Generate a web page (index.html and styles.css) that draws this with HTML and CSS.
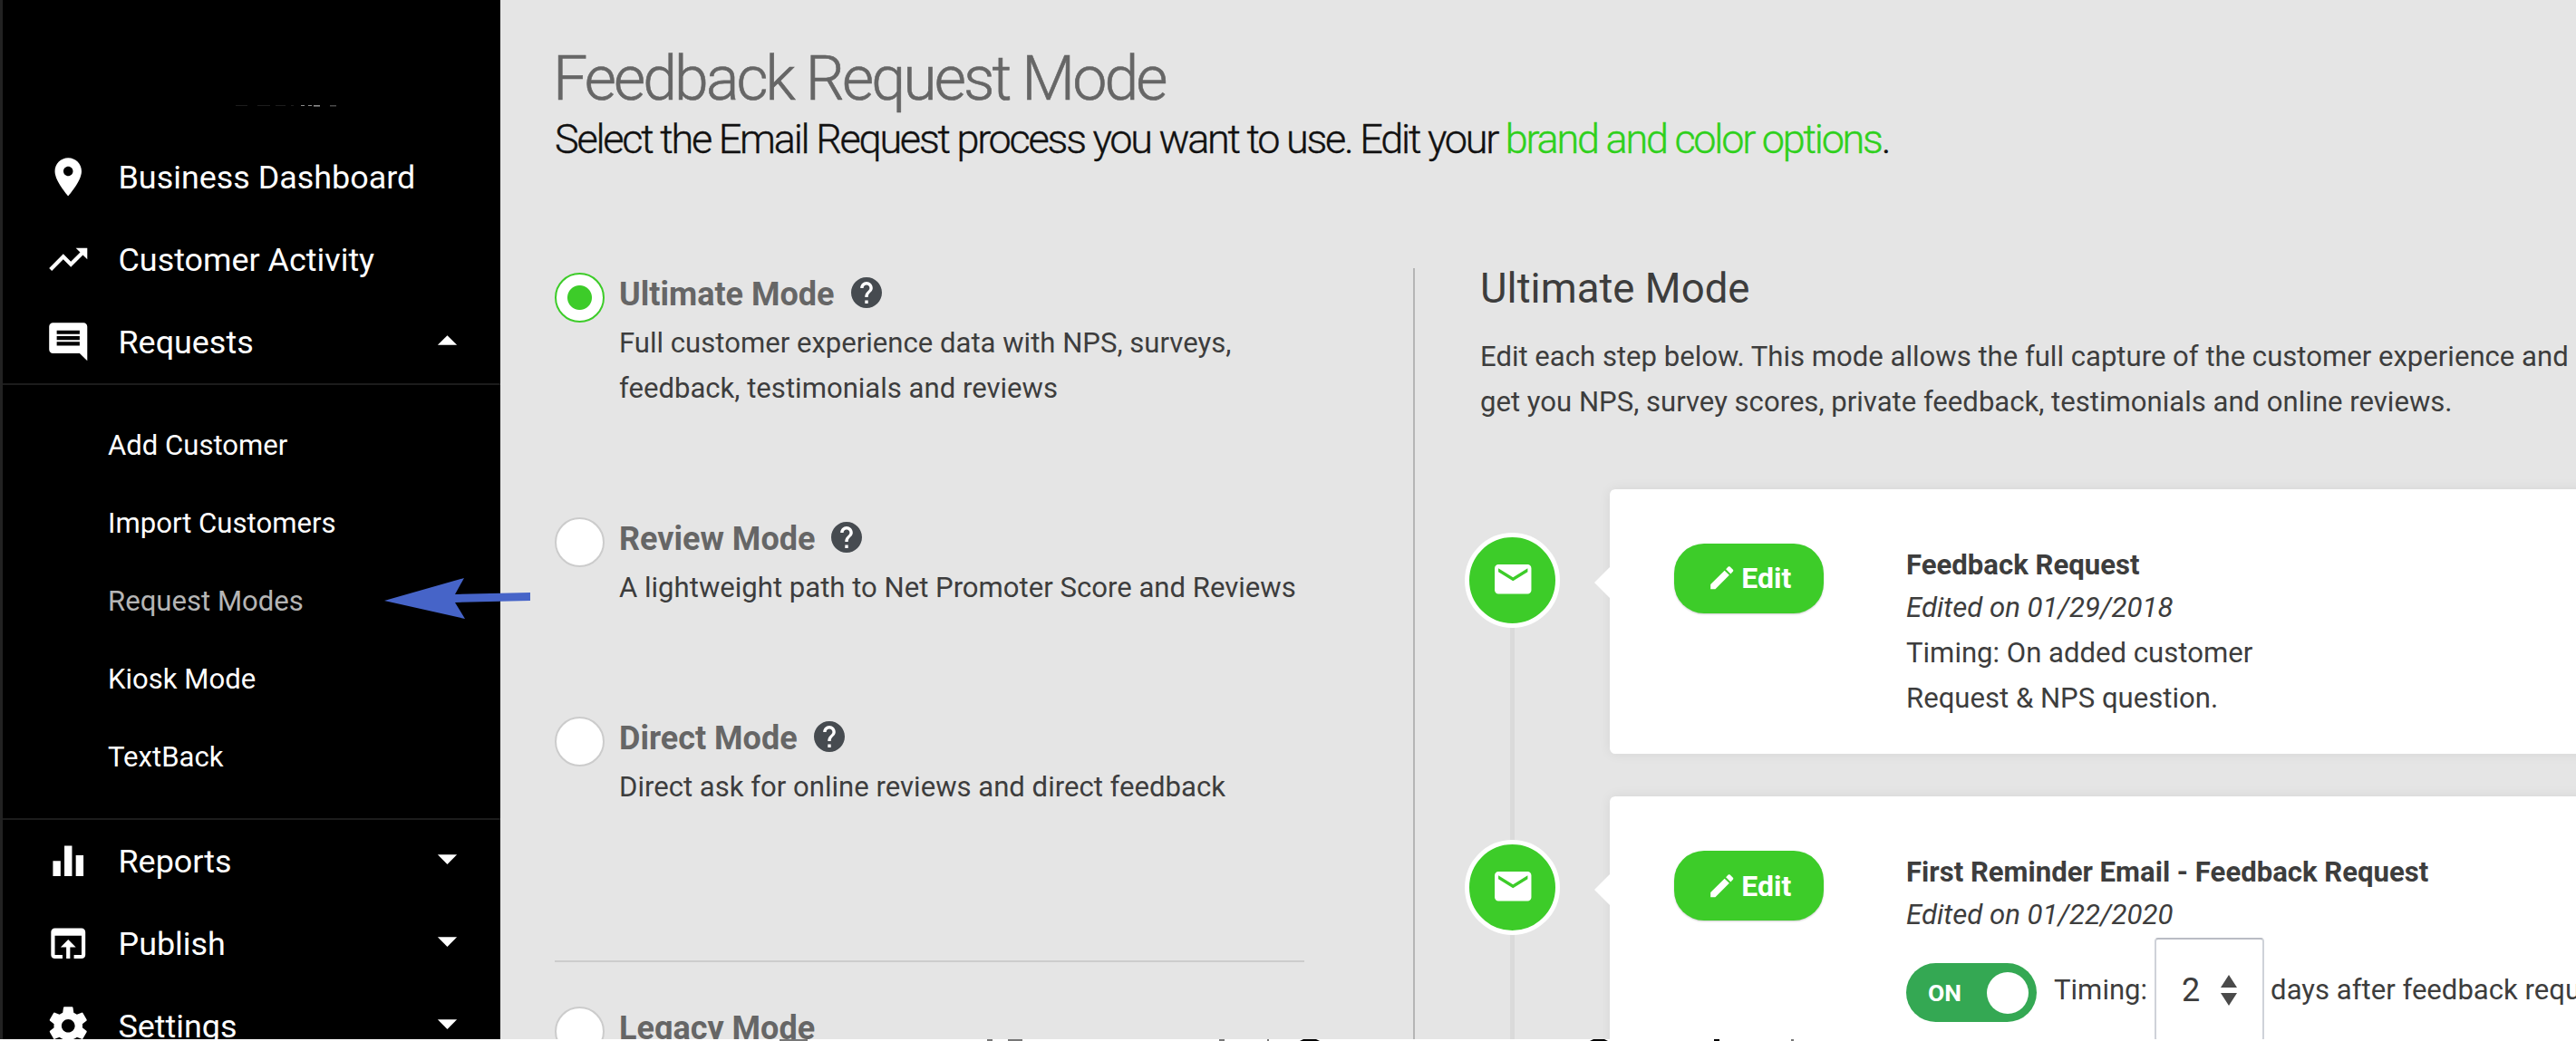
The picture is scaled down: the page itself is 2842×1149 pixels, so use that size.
FILE: index.html
```html
<!DOCTYPE html>
<html lang="en">
<head>
  <meta charset="UTF-8">
  <meta name="viewport" content="width=device-width, initial-scale=1.0">
  <title>Feedback Request Mode</title>
  <link rel="stylesheet" href="styles.css">
</head>
<body>

<!-- shared icons -->
<svg class="sprite" aria-hidden="true">
  <symbol id="help" viewBox="2 2 20 20"><path d="M12 2C6.48 2 2 6.48 2 12s4.48 10 10 10 10-4.48 10-10S17.52 2 12 2zm1 17h-2v-2h2v2zm2.07-7.75l-.9.92C13.45 12.9 13 13.5 13 15h-2v-.5c0-1.1.45-2.1 1.17-2.83l1.24-1.26c.37-.36.59-.86.59-1.41 0-1.1-.9-2-2-2s-2 .9-2 2H8c0-2.21 1.79-4 4-4s4 1.79 4 4c0 .88-.36 1.68-.93 2.25z"/></symbol>
  <symbol id="mail" viewBox="0 0 24 24"><path d="M20 4H4c-1.1 0-1.99.9-1.99 2L2 18c0 1.1.9 2 2 2h16c1.1 0 2-.9 2-2V6c0-1.1-.9-2-2-2zm0 4l-8 5-8-5V6l8 5 8-5v2z"/></symbol>
  <symbol id="pencil" viewBox="0 0 24 24"><path d="M3 17.25V21h3.75L17.81 9.94l-3.75-3.75L3 17.25zM20.71 7.04c.39-.39.39-1.02 0-1.41l-2.34-2.34c-.39-.39-1.02-.39-1.41 0l-1.83 1.83 3.75 3.75 1.83-1.83z"/></symbol>
  <symbol id="drop" viewBox="0 0 24 24"><path d="M7 10l5 5 5-5z"/></symbol>
</svg>

<div class="app">
  <aside class="sidebar">
    <div class="logo">
      <svg viewBox="0 0 120 4">
        <g fill="#1d1d1d">
          <rect x="1" y="1" width="13" height="1"/><rect x="25" y="1" width="14" height="1"/>
          <rect x="45" y="1" width="11" height="1"/><rect x="62" y="1" width="3" height="1"/>
        </g>
        <g fill="#8a8a8a">
          <rect x="73" y="1" width="4" height="1"/><rect x="81" y="1" width="4" height="1"/>
          <rect x="87" y="1" width="7" height="1.6"/><rect x="105" y="1.2" width="7" height="1.2" fill="#5c5c5c"/>
        </g>
      </svg>
    </div>
    <nav>
      <a class="nav-item">
        <svg class="nav-icon" viewBox="0 0 24 24"><path d="M12 2C8.13 2 5 5.13 5 9c0 5.25 7 13 7 13s7-7.75 7-13c0-3.87-3.13-7-7-7zm0 9.5c-1.38 0-2.5-1.12-2.5-2.5s1.12-2.5 2.5-2.5 2.5 1.12 2.5 2.5-1.12 2.5-2.5 2.5z"/></svg>
        <span>Business Dashboard</span>
      </a>
      <a class="nav-item">
        <svg class="nav-icon" viewBox="0 0 24 24"><path d="M16 6l2.29 2.29-4.88 4.88-4-4L2 16.59 3.41 18l6-6 4 4 6.3-6.29L22 12V6z"/></svg>
        <span>Customer Activity</span>
      </a>
      <a class="nav-item">
        <svg class="nav-icon" viewBox="0 0 24 24"><path d="M21.99 4c0-1.1-.89-2-1.99-2H4c-1.1 0-2 .9-2 2v12c0 1.1.9 2 2 2h14l4 4-.01-18zM18 14H6v-2h12v2zm0-3H6V9h12v2zm0-3H6V6h12v2z"/></svg>
        <span>Requests</span>
        <svg class="nav-caret up"><use href="#drop"/></svg>
      </a>
      <div class="submenu">
        <a>Add Customer</a>
        <a>Import Customers</a>
        <a class="active">Request Modes</a>
        <a>Kiosk Mode</a>
        <a>TextBack</a>
      </div>
      <a class="nav-item">
        <svg class="nav-icon" viewBox="0 0 24 24"><path d="M10 20h4V4h-4v16zm-6 0h4v-8H4v8zM16 9v11h4V9h-4z"/></svg>
        <span>Reports</span>
        <svg class="nav-caret"><use href="#drop"/></svg>
      </a>
      <a class="nav-item">
        <svg class="nav-icon" viewBox="0 0 24 24"><path d="M19 4H5c-1.11 0-2 .9-2 2v12c0 1.1.89 2 2 2h4v-2H5V8h14v10h-4v2h4c1.1 0 2-.9 2-2V6c0-1.1-.89-2-2-2zm-7 6l-4 4h3v6h2v-6h3l-4-4z"/></svg>
        <span>Publish</span>
        <svg class="nav-caret"><use href="#drop"/></svg>
      </a>
      <a class="nav-item">
        <svg class="nav-icon" viewBox="0 0 24 24"><path d="M19.43 12.98c.04-.32.07-.64.07-.98s-.03-.66-.07-.98l2.11-1.65c.19-.15.24-.42.12-.64l-2-3.46c-.12-.22-.39-.3-.61-.22l-2.49 1c-.52-.4-1.08-.73-1.69-.98l-.38-2.65C14.46 2.18 14.25 2 14 2h-4c-.25 0-.46.18-.49.42l-.38 2.65c-.61.25-1.17.59-1.69.98l-2.49-1c-.23-.09-.49 0-.61.22l-2 3.46c-.13.22-.07.49.12.64l2.11 1.65c-.04.32-.07.65-.07.98s.03.66.07.98l-2.11 1.65c-.19.15-.24.42-.12.64l2 3.46c.12.22.39.3.61.22l2.49-1c.52.4 1.08.73 1.69.98l.38 2.65c.03.24.24.42.49.42h4c.25 0 .46-.18.49-.42l.38-2.65c.61-.25 1.17-.59 1.69-.98l2.49 1c.23.09.49 0 .61-.22l2-3.46c.12-.22.07-.49-.12-.64l-2.11-1.65zM12 15.5c-1.93 0-3.5-1.57-3.5-3.5s1.57-3.5 3.5-3.5 3.5 1.57 3.5 3.5-1.57 3.5-3.5 3.5z"/></svg>
        <span>Settings</span>
        <svg class="nav-caret"><use href="#drop"/></svg>
      </a>
    </nav>
  </aside>

  <main class="content">
    <h1>Feedback Request Mode</h1>
    <p class="lead">Select the Email Request process you want to use. Edit your <a>brand and color options</a>.</p>

    <div class="columns">
      <section class="modes">
        <div class="mode">
          <span class="radio checked"></span>
          <div>
            <h3>Ultimate Mode <svg class="help"><use href="#help"/></svg></h3>
            <p>Full customer experience data with NPS, surveys,<br>feedback, testimonials and reviews</p>
          </div>
        </div>
        <div class="mode">
          <span class="radio"></span>
          <div>
            <h3>Review Mode <svg class="help"><use href="#help"/></svg></h3>
            <p>A lightweight path to Net Promoter Score and Reviews</p>
          </div>
        </div>
        <div class="mode">
          <span class="radio"></span>
          <div>
            <h3>Direct Mode <svg class="help"><use href="#help"/></svg></h3>
            <p>Direct ask for online reviews and direct feedback</p>
          </div>
        </div>
        <hr>
        <div class="mode">
          <span class="radio"></span>
          <div>
            <h3>Legacy Mode</h3>
          </div>
        </div>
      </section>

      <section class="detail">
        <h2>Ultimate Mode</h2>
        <p class="intro">Edit each step below. This mode allows the full capture of the customer experience and it will<br>get you NPS, survey scores, private feedback, testimonials and online reviews.</p>

        <div class="step">
          <div class="marker">
            <span class="rail start"></span>
            <span class="dot"><svg><use href="#mail"/></svg></span>
            <span class="rail"></span>
          </div>
          <div class="card">
            <button class="edit"><svg><use href="#pencil"/></svg>Edit</button>
            <div class="info">
              <h4>Feedback Request</h4>
              <em>Edited on 01/29/2018</em>
              <p>Timing: On added customer</p>
              <p>Request &amp; NPS question.</p>
            </div>
          </div>
        </div>

        <div class="step">
          <div class="marker">
            <span class="rail start"></span>
            <span class="dot"><svg><use href="#mail"/></svg></span>
            <span class="rail"></span>
          </div>
          <div class="card">
            <button class="edit"><svg><use href="#pencil"/></svg>Edit</button>
            <div class="info">
              <h4>First Reminder Email - Feedback Request</h4>
              <em>Edited on 01/22/2020</em>
              <div class="timing">
                <span class="toggle">ON<i></i></span>
                <span>Timing:</span>
                <span class="days">2
                  <svg viewBox="0 0 18 34"><path d="M9 0l9 14H0zM0 20h18L9 34z"/></svg>
                </span>
                <span>days after feedback request</span>
              </div>
            </div>
          </div>
        </div>
      </section>
    </div>
  </main>
</div>

<svg class="pointer" viewBox="0 0 162 46"><path d="M0 25L88 0 78 18 161 16v9L78 27 89 45z"/></svg>

<div class="footer-edge">
  <svg viewBox="0 0 2842 2">
    <g fill="#777">
      <rect x="860" width="31" height="2"/><rect x="1089" width="6" height="2"/><rect x="1112" width="16" height="2"/>
      <rect x="1345" width="6" height="2"/><rect x="1398" width="2" height="2"/><rect x="1976" width="3" height="2"/>
    </g>
    <path d="M1438 0h14l4 2h-22zM1758 0h12l4 2h-20zM1891 0h6v2h-6z"/>
  </svg>
</div>

</body>
</html>
```
FILE: styles.css
```css
* {
  box-sizing: border-box;
}

body {
  margin: 0;
  height: 100vh;
  overflow: hidden;
  position: relative;
  font-family: Roboto, "Liberation Sans", sans-serif;
  font-size: 31.1px;
  line-height: 50px;
  color: #3d3d3d;
  background-color: #e5e5e5;
}

h1, h2, h3, h4, p {
  margin: 0;
}

.sprite {
  display: none;
}

.app {
  display: flex;
  height: 100vh;
  overflow: hidden;
}

/* Sidebar */
.sidebar {
  flex: none;
  width: 552px;
  background-color: #000;
  border-left: 3px solid #222;
  color: #fff;
}

.logo {
  height: 150px;
  padding: 115px 0 0 256px;
}

.logo svg {
  display: block;
  width: 120px;
  height: 4px;
}

.nav-item {
  display: flex;
  align-items: center;
  height: 91px;
  padding: 0 45px 0 47px;
  font-size: 35.9px;
}

.nav-icon {
  width: 50.5px;
  height: 50.5px;
  margin-right: 30px;
  fill: #fff;
}

.nav-caret {
  width: 51px;
  height: 51px;
  margin: -6px -12px 0 auto;
  fill: #fff;
}

.nav-caret.up {
  margin-top: -2px;
  transform: rotate(180deg);
}

.submenu {
  display: flex;
  flex-direction: column;
  padding: 24px 0 24px 116px;
  border-top: 2px solid #1c1c1c;
  border-bottom: 2px solid #1c1c1c;
  font-size: 31.1px;
}

.submenu a {
  line-height: 86px;
}

.submenu .active {
  color: #b5b5b5;
}

/* Main */
.content {
  flex: 1;
  min-width: 0;
  padding: 47px 0 0 60px;
  white-space: nowrap;
}

h1 {
  margin-left: -2px;
  font-size: 68px;
  font-weight: 300;
  line-height: 80px;
  letter-spacing: -2.9px;
  color: #666;
  -webkit-text-stroke: 0.6px #666;
}

.lead {
  font-size: 45px;
  font-weight: 300;
  line-height: 54px;
  letter-spacing: -2.24px;
  color: #111;
  -webkit-text-stroke: 0.4px;
}

.lead a {
  color: #2fd01c;
}

.columns {
  display: flex;
  margin-top: 115px;
}

.modes {
  flex: none;
  width: 949px;
  height: 860px;
  padding-top: 4px;
  border-right: 2px solid #b5b5b5;
}

.mode {
  display: flex;
  gap: 16px;
  margin-bottom: 116px;
}

.mode h3 {
  display: flex;
  align-items: center;
  margin-bottom: 4px;
  font-size: 36px;
  line-height: 50px;
  color: #666;
}

.help {
  width: 34px;
  height: 34px;
  margin: -4px 0 0 18px;
  fill: #464b50;
  background: radial-gradient(#fff 50%, transparent 55%);
}

.radio {
  width: 55px;
  height: 55px;
  margin-top: 1px;
  border: 2px solid #ccc;
  border-radius: 50%;
  background-color: #fff;
}

.radio.checked {
  border-color: #3dcc29;
  background: radial-gradient(#3dcc29 13px, #fff 14px);
}

.modes hr {
  width: 827px;
  height: 2px;
  margin: 166px 0 48px;
  border: 0;
  background-color: #ccc;
}

.mode:has(+ hr) {
  margin-bottom: 0;
}

.detail {
  flex: 1;
  min-width: 0;
  padding: 1px 0 0 72px;
}

h2 {
  margin-bottom: 27.5px;
  font-size: 45.6px;
  font-weight: 400;
  line-height: 44px;
}

.intro {
  margin-bottom: 71px;
}

/* Steps */
.step {
  display: flex;
  gap: 55px;
  margin-left: -17px;
}

.marker {
  flex: none;
  display: flex;
  flex-direction: column;
  align-items: center;
  width: 105px;
}

.rail {
  flex: 1;
  width: 5px;
  background-color: #dadada;
}

.rail.start {
  flex: none;
  height: 48px;
}

.step:nth-of-type(1) .rail.start {
  background: none;
}

.dot {
  display: flex;
  align-items: center;
  justify-content: center;
  width: 105px;
  height: 105px;
  border: 5px solid #fff;
  border-radius: 50%;
  background-color: #3dcc29;
}

.dot svg {
  width: 48.5px;
  height: 48.5px;
  margin: -2px 0 0 1px;
  fill: #fff;
}

.card {
  position: relative;
  flex: none;
  display: flex;
  align-items: flex-start;
  gap: 91px;
  width: 1200px;
  min-height: 292px;
  margin-bottom: 47.7px;
  padding: 60px 71px 36px;
  border-radius: 6px;
  background-color: #fff;
  box-shadow: 0 0 14px rgba(0, 0, 0, 0.07);
}

.card::before {
  content: "";
  position: absolute;
  top: 86px;
  left: -17px;
  border: 17px solid transparent;
  border-left: 0;
  border-right-color: #fff;
}

.edit {
  display: flex;
  align-items: center;
  justify-content: center;
  gap: 5px;
  width: 165px;
  height: 77px;
  padding: 0;
  border: none;
  border-radius: 33px;
  background-color: #3dcc29;
  box-shadow: 0 1px 2px rgba(0, 0, 0, 0.2);
  color: #fff;
  font: 700 32px Roboto, sans-serif;
}

.edit svg {
  width: 33.5px;
  height: 33.5px;
  fill: #fff;
}

.info h4 {
  font-size: 31.1px;
  line-height: 47px;
}

.info em {
  display: block;
  margin-bottom: 1px;
  font-size: 31.2px;
  line-height: 48px;
}

.timing {
  display: flex;
  align-items: center;
}

.toggle {
  display: flex;
  align-items: center;
  justify-content: space-between;
  width: 144px;
  height: 65px;
  margin: 6px 19px 0 0;
  padding: 0 9px 0 24px;
  border-radius: 33px;
  background-color: #34a853;
  color: #fff;
  font-size: 26.5px;
  font-weight: 700;
}

.toggle i {
  width: 46px;
  height: 46px;
  border-radius: 50%;
  background-color: #fff;
}

.days {
  display: flex;
  align-items: center;
  justify-content: space-between;
  width: 121px;
  height: 115px;
  margin: 0 7px 0 8px;
  padding: 0 28px;
  border: 2px solid #cfd2d9;
  border-top-color: #b9bcc4;
  border-radius: 4px;
  font-size: 36px;
}

.days svg {
  width: 18px;
  height: 34px;
  fill: #4a4a4a;
}

/* Arrow pointing at the active menu entry */
.pointer {
  position: absolute;
  top: 638px;
  left: 424px;
  width: 162px;
  height: 46px;
  fill: #4664c8;
}

.footer-edge {
  position: absolute;
  bottom: 0;
  left: 0;
  width: 100%;
  height: 2px;
  background-color: #fff;
}

.footer-edge svg {
  display: block;
  width: 2842px;
  height: 2px;
}
```
